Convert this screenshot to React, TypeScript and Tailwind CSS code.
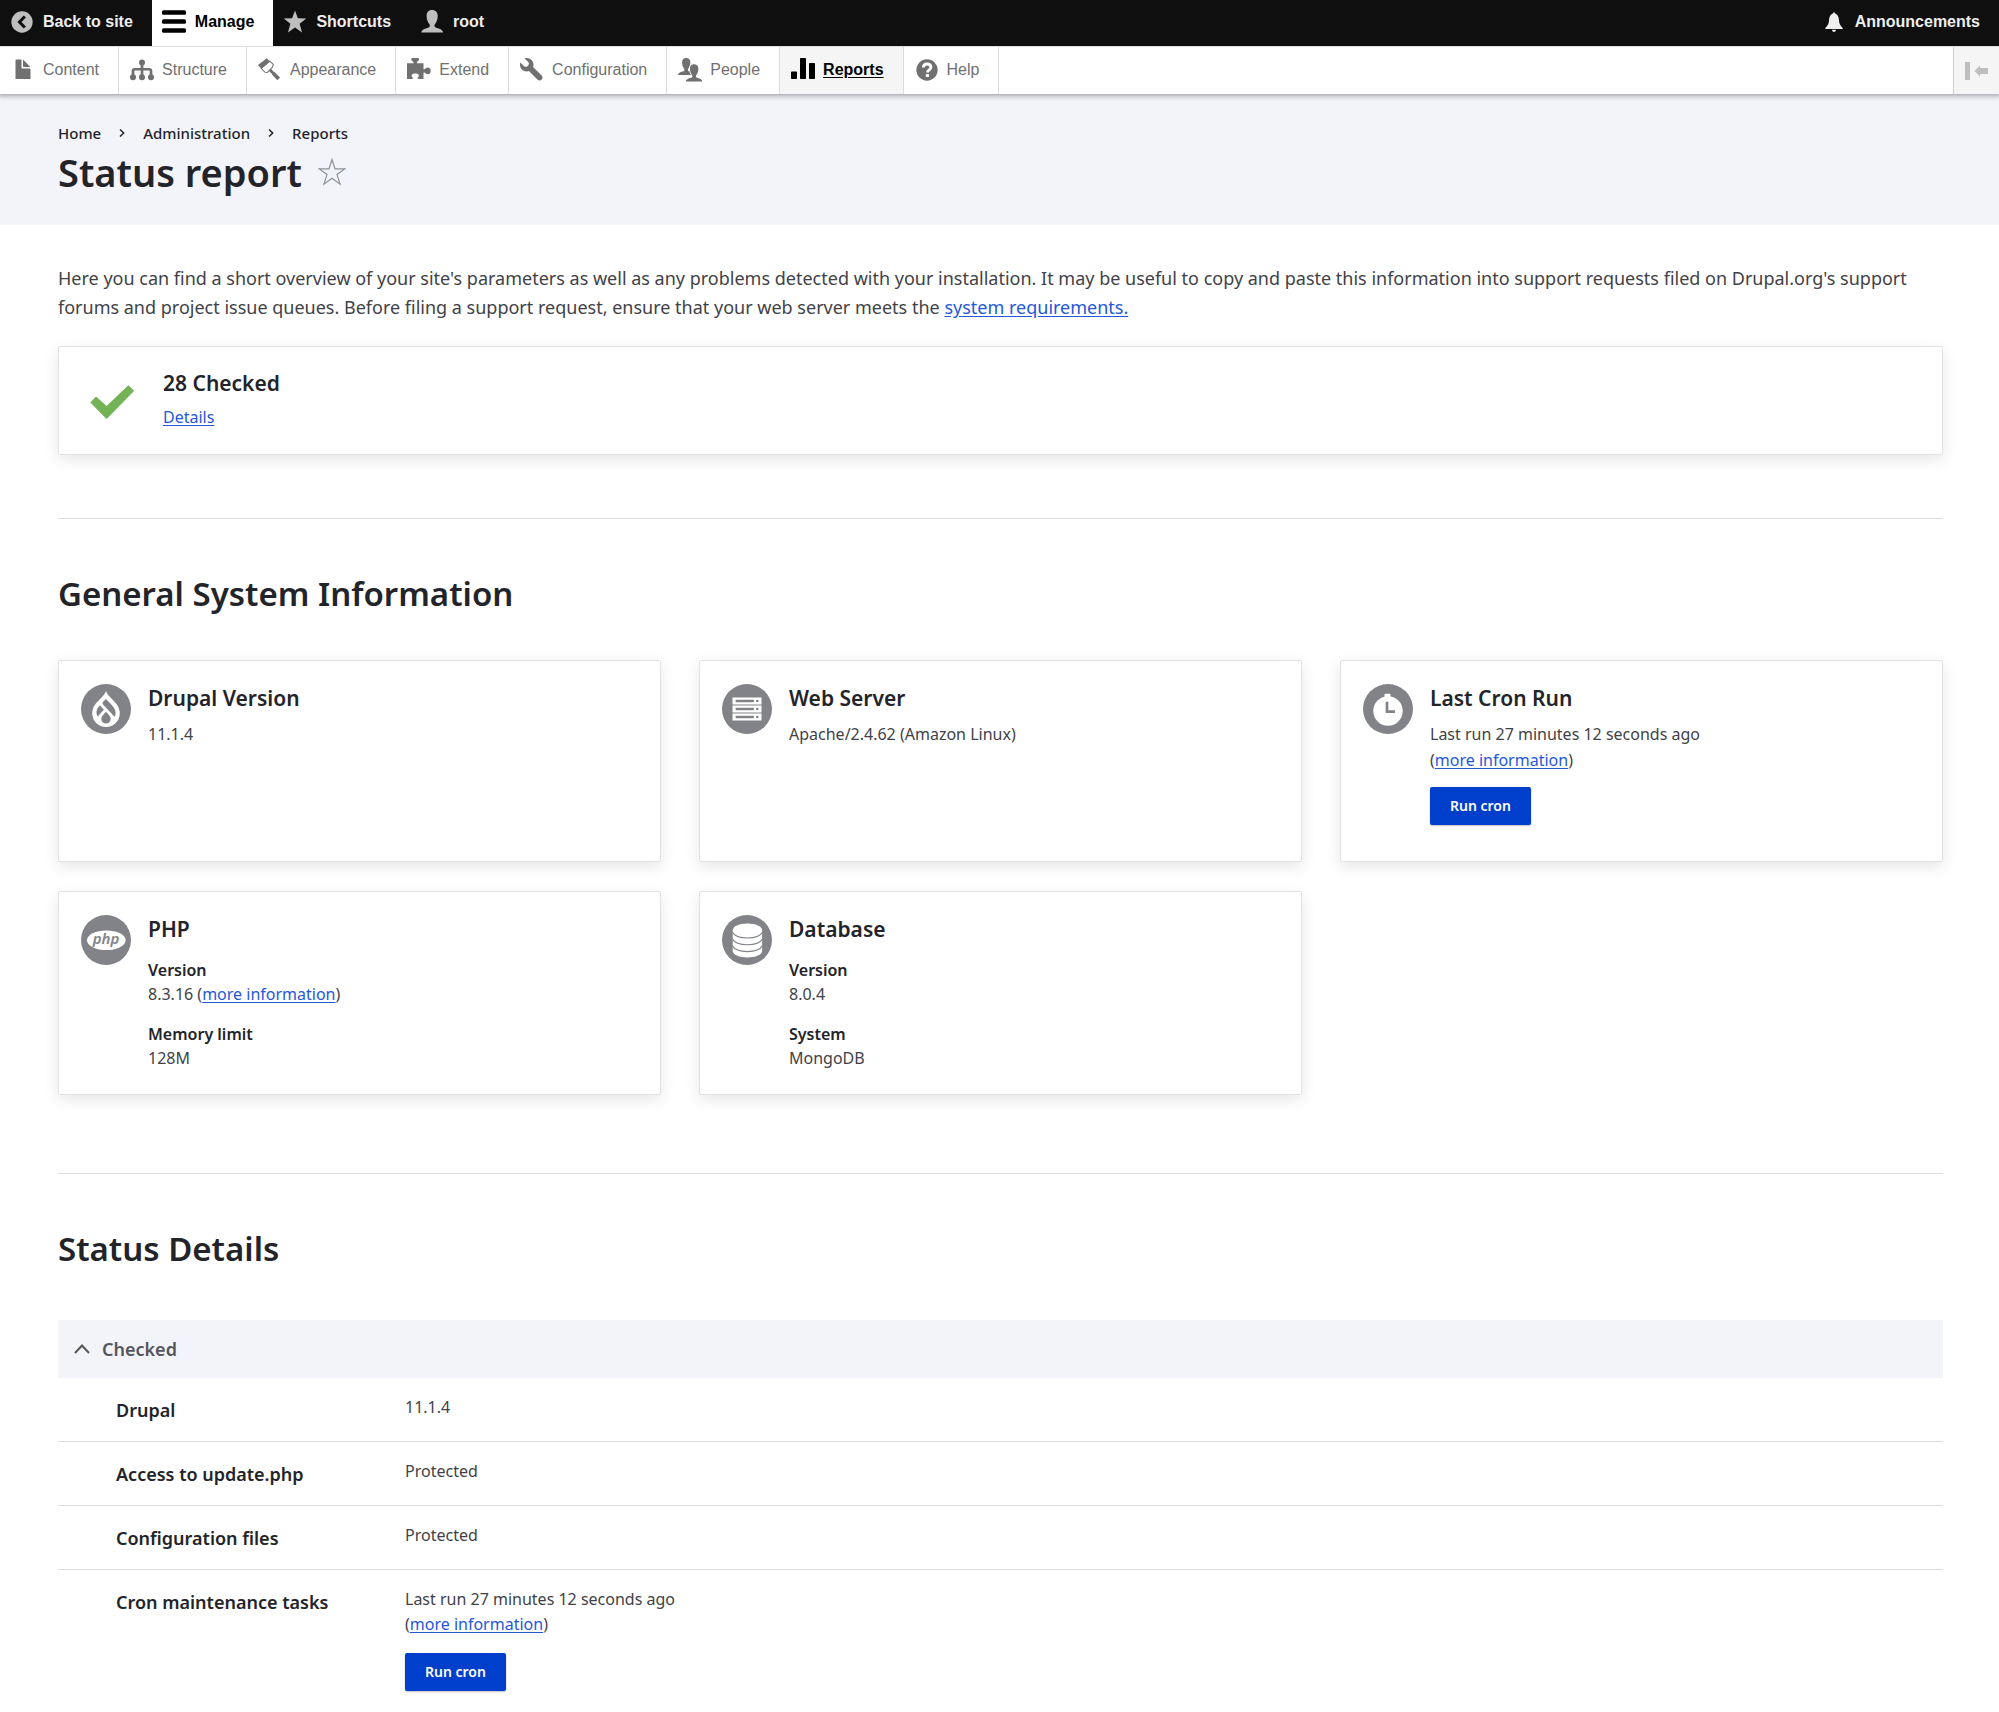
import React from "react";
import type { ReactNode } from "react";
import { SiDrupal } from "react-icons/si";

/* ---------- toolbar icons, drawn on a 16-unit grid ---------- */

function Glyph({ className, children }: { className?: string; children: ReactNode }) {
  return (
    <svg viewBox="0 0 16 16" aria-hidden="true" fill="currentColor" className={`h-6 w-6 shrink-0 ${className ?? ""}`}>
      {children}
    </svg>
  );
}

const BUST =
  "M8 0C5.5 0 4.3 1.6 4.4 4.2c.1 2.2.8 4.200 1.900 5.300.5 1 .3 1.900-.8 2.300C3.600 12.400 1 13 .8 15h14.600c-.2-2-2.700-2.600-4.700-3.200-1.100-.4-1.300-1.300-.8-2.300 1.100-1.100 1.800-3.100 1.900-5.300C11.900 1.600 10.500 0 8 0z";

const BackIcon = () => (
  <Glyph>
    <circle cx="8" cy="8" r="7.1" />
    <path d="M9.900 4.300 6.300 8l3.600 3.700" fill="none" stroke="#0f0f0f" strokeWidth="2" />
  </Glyph>
);
const MenuIcon = () => (
  <Glyph>
    <rect x="0" y=".2" width="16" height="2.900" rx="1" />
    <rect x="0" y="6.200" width="16" height="2.900" rx="1" />
    <rect x="0" y="12.200" width="16" height="2.900" rx="1" />
  </Glyph>
);
const StarIcon = () => (
  <Glyph>
    <path d="m8 .3 1.900 5.200 5.600.2-4.400 3.400 1.600 5.900L8 11.700 3.300 15l1.600-5.900L.5 5.700l5.600-.2z" />
  </Glyph>
);
const PersonIcon = () => (
  <Glyph>
    <path d={BUST} />
  </Glyph>
);
const BellIcon = () => (
  <Glyph>
    <path d="M8 1.700c.5 0 .8.3.9.8 1.500.5 2.300 2 2.400 4.200.1 2.300.9 3.900 2.500 5.300v.7H2.200V12c1.600-1.400 2.400-3 2.500-5.300.1-2.200.9-3.700 2.400-4.200.1-.5.4-.8.9-.8zM6.700 13.200h2.600c-.1.900-.6 1.500-1.300 1.500s-1.200-.6-1.300-1.500z" />
  </Glyph>
);
const FileIcon = () => (
  <Glyph>
    <path d="M12.500 7h-5A.5.5 0 0 1 7 6.500v-5A.5.5 0 0 0 6.500 1h-3a.5.5 0 0 0-.5.5V14h10V7.500a.5.5 0 0 0-.5-.5zM8.500 6h4c.3 0 .3-.2.1-.4L8.400 1.400c-.2-.2-.4-.1-.4.1v4c0 .3.2.5.5.5z" />
  </Glyph>
);
const TreeIcon = () => (
  <Glyph>
    <circle cx="8" cy="3" r="2" />
    <circle cx="2" cy="12.900" r="2" />
    <circle cx="8" cy="12.900" r="2" />
    <circle cx="14" cy="12.900" r="2" />
    <path d="M8 3v10M2 12.500V8.700q0-1.200 1.200-1.200h9.600q1.200 0 1.200 1.200v3.800" fill="none" stroke="currentColor" strokeWidth="1.800" />
  </Glyph>
);
const BrushIcon = () => (
  <Glyph>
    <path d="M5.800.2 0 4.700l2.300 2.500L8 2.400z" />
    <path d="M2.100 6.900 7.800 2.100l2.400 2.100-.5 1.900-3.400 3.500-1.600-.1z" fill="none" stroke="currentColor" strokeWidth=".7" strokeLinejoin="round" />
    <path d="m7.800 7.800 2.900 2.900" fill="none" stroke="currentColor" strokeWidth="1.900" />
    <path d="m10.200 10.200 3.600 3.700" fill="none" stroke="currentColor" strokeWidth="2.500" />
  </Glyph>
);
const PuzzleIcon = () => (
  <Glyph>
    <path d="M0 3.500h4.200c.3-.5.2-.9-.5-1.300-.6-.4-.9-.9-.9-1.300 0-.6.4-.9.900-.9h3.500c.5 0 .9.3.9.9 0 .5-.3.900-.9 1.300-.6.4-.8.8-.5 1.300H11v3.800c.4.400.900.3 1.400-.3.400-.4.9-.6 1.500-.6 1.100 0 1.900.9 1.900 2.200s-.8 2.200-1.900 2.200c-.6 0-1.100-.2-1.500-.6-.5-.6-1-.7-1.400-.3V14H7.300c-.3-.5-.2-.9.200-1.300.5-.5.6-1 .2-1.500-.5-.6-1.200-.9-2.200-.9s-1.700.3-2.200.9c-.4.5-.3 1 .2 1.500.4.4.5.8.2 1.300H0z" />
  </Glyph>
);
const WrenchIcon = () => (
  <Glyph>
    <path d="M14.416 11.586 8.750 5.920c.15-.449.252-.921.252-1.419C9.002 2.015 6.986 0 4.500 0c-.505 0-.981.102-1.434.255l2.431 2.431c.588.588.588 1.547 0 2.135l-.611.610c-.294.295-.68.441-1.066.441-.387 0-.773-.146-1.066-.441L.255 3.066C.102 3.519 0 3.996 0 4.500 0 6.986 2.014 9 4.500 9c.5 0 .972-.102 1.421-.251l5.667 5.665c.781.781 2.047.781 2.828 0s.781-2.047 0-2.828z" />
  </Glyph>
);
const PeopleIcon = () => (
  <Glyph>
    <path d={BUST} transform="translate(-.6 0) scale(.75)" />
    <path d={BUST} transform="translate(4.600 4.200) scale(.76)" stroke="#fff" strokeWidth="1.600" paintOrder="stroke" />
  </Glyph>
);
const ChartIcon = () => (
  <Glyph>
    <rect x="0" y="9" width="4" height="5" rx=".5" />
    <rect x="6" y="0" width="4" height="14" rx=".5" />
    <rect x="12" y="3.300" width="4" height="10.700" rx=".5" />
  </Glyph>
);
const HelpIcon = () => (
  <Glyph>
    <circle cx="8" cy="8" r="7.100" />
    <path d="M5.600 6.300C5.600 4.800 6.600 4 8.100 4s2.500.8 2.500 2.100c0 1.800-2.300 1.700-2.300 3.500" fill="none" stroke="#fff" strokeWidth="1.900" />
    <rect x="7.200" y="10.700" width="2.100" height="2" rx=".4" fill="#fff" />
  </Glyph>
);

/* ---------- round card icons, drawn on a 50-unit grid ---------- */

function Disc({ children }: { children?: ReactNode }) {
  return (
    <svg viewBox="0 0 50 50" aria-hidden="true" className="h-[50px] w-[50px]">
      <circle cx="25" cy="25" r="25" fill="#828388" />
      {children}
    </svg>
  );
}
const DrupalDisc = () => (
  <span className="flex h-[50px] w-[50px] items-center justify-center rounded-full bg-[#828388]">
    <SiDrupal aria-hidden="true" className="h-9 w-9 text-white" />
  </span>
);
const ServerDisc = () => (
  <Disc>
    {[13.5, 21.5, 29.5].map((y) => (
      <g key={y}>
        <rect x="10.500" y={y} width="29" height="7" fill="#fff" />
        <rect x="13.500" y={y + 2.2} width="18.500" height="2.600" rx="1" fill="#828388" />
        <circle cx="35.300" cy={y + 3.5} r="1.300" fill="#828388" />
      </g>
    ))}
  </Disc>
);
const ClockDisc = () => (
  <Disc>
    <circle cx="25" cy="27" r="14.700" fill="#fff" />
    <rect x="21.500" y="9.800" width="6" height="4" rx="1" fill="#fff" />
    <path d="M24 17.700v10H32" fill="none" stroke="#828388" strokeWidth="2.700" />
  </Disc>
);
const PhpDisc = () => (
  <Disc>
    <ellipse cx="25.300" cy="25.300" rx="19.300" ry="9.800" fill="#fff" />
    <text x="25" y="29" textAnchor="middle" fill="#828388" fontFamily="Noto Sans, sans-serif" fontStyle="italic" fontWeight="600" fontSize="15">
      php
    </text>
  </Disc>
);
const DatabaseDisc = () => (
  <Disc>
    <path d="M10.700 15c0-3.600 6.600-6.500 14.700-6.500s14.700 2.900 14.700 6.500v21c0 3.600-6.600 6.500-14.700 6.500S10.700 39.600 10.700 36z" fill="#fff" />
    <path
      d="M10.200 17c2 3.700 7.600 6 15.200 6s13.200-2.300 15.200-6M10.200 23.800c2 3.700 7.600 6 15.200 6s13.200-2.300 15.200-6M10.200 30.600c2 3.700 7.600 6 15.200 6s13.200-2.300 15.200-6"
      fill="none"
      stroke="#828388"
      strokeWidth="1.100"
    />
  </Disc>
);

/* ---------- shared pieces ---------- */

function Link({ children }: { children: ReactNode }) {
  return (
    <a href="#" className="text-[#2458d8] underline underline-offset-2">
      {children}
    </a>
  );
}

function CronStatus({ lineClass }: { lineClass: string }) {
  return (
    <p className={lineClass}>
      Last run 27 minutes 12 seconds ago
      <br />(<Link>more information</Link>)
    </p>
  );
}

function RunCronButton() {
  return (
    <button
      type="button"
      className="h-[38px] rounded-xs bg-[#003ecc] px-5 text-sm font-semibold text-white shadow-[0_1px_2px_rgba(0,0,0,0.25)]"
    >
      Run cron
    </button>
  );
}

const CARD = "rounded-xs border border-[#e2e2e5] bg-white shadow-[0_5px_15px_rgba(0,0,0,0.1)]";

function InfoCard({ icon, title, children }: { icon: ReactNode; title: string; children: ReactNode }) {
  return (
    <section className={`flex gap-[17px] px-[22px] pt-[23px] pb-6 ${CARD}`}>
      <div className="shrink-0">{icon}</div>
      <div>
        <h3 className="text-[21px] leading-7 font-semibold text-[#232429]">{title}</h3>
        {children}
      </div>
    </section>
  );
}

function Facts({ items }: { items: { term: string; value: ReactNode }[] }) {
  return (
    <dl className="mt-[15px] flex flex-col gap-4 text-base leading-6">
      {items.map((i) => (
        <div key={i.term}>
          <dt className="font-semibold text-[#232429]">{i.term}</dt>
          <dd>{i.value}</dd>
        </div>
      ))}
    </dl>
  );
}

function SectionTitle({ children }: { children: ReactNode }) {
  return <h2 className="mt-[53px] text-[33px] leading-[44px] font-semibold text-[#232429]">{children}</h2>;
}

/* ---------- page ---------- */

const tray = [
  { label: "Content", icon: <FileIcon /> },
  { label: "Structure", icon: <TreeIcon /> },
  { label: "Appearance", icon: <BrushIcon /> },
  { label: "Extend", icon: <PuzzleIcon /> },
  { label: "Configuration", icon: <WrenchIcon /> },
  { label: "People", icon: <PeopleIcon /> },
  { label: "Reports", icon: <ChartIcon />, active: true },
  { label: "Help", icon: <HelpIcon /> },
];

function Toolbar() {
  const item = "flex items-center gap-[9px] pl-[10px] pr-[19px]";
  return (
    <div className="relative font-['Liberation_Sans',Arial,sans-serif] text-base leading-5 shadow-[0_0_5px_2px_rgba(0,0,0,0.33)]">
      <nav aria-label="Toolbar" className="flex h-[46px] bg-[#0f0f0f] pb-0.5 font-bold text-[#eee]">
        <a href="#" className={item}>
          <span className="text-[#bebebe]"><BackIcon /></span>Back to site
        </a>
        <a href="#" className={`-mb-0.5 bg-white pb-0.5 text-black ${item}`}>
          <MenuIcon />Manage
        </a>
        <a href="#" className={item}>
          <span className="text-[#bebebe]"><StarIcon /></span>Shortcuts
        </a>
        <a href="#" className={item}>
          <span className="text-[#bebebe]"><PersonIcon /></span>root
        </a>
        <a href="#" className={`ml-auto ${item}`}>
          <BellIcon />Announcements
        </a>
      </nav>
      <nav aria-label="Administration menu" className="flex h-12 border-t border-[#ddd] bg-white text-[#707070]">
        {tray.map((t) => (
          <a
            key={t.label}
            href="#"
            className={
              t.active
                ? "flex items-center gap-2 border-r border-[#ddd] bg-[#f5f5f5] pr-[19px] pb-0.5 pl-[11px] font-bold text-black"
                : "flex items-center gap-2 border-r border-[#ddd] pr-[19px] pb-0.5 pl-[11px]"
            }
          >
            {t.icon}
            <span className={t.active ? "underline underline-offset-2" : ""}>{t.label}</span>
          </a>
        ))}
        <button
          type="button"
          aria-label="Vertical orientation"
          className="ml-auto flex w-[46px] items-center justify-center border-l border-[#ccc] bg-[#f5f5f5] text-[#bebebe]"
        >
          <svg viewBox="0 0 24 24" aria-hidden="true" fill="currentColor" className="h-6 w-6">
            <path d="M0 3h5v18H0zM9.500 12l5.500-5.500V9h8v6h-8v2.500z" />
          </svg>
        </button>
      </nav>
    </div>
  );
}

const Chevron = () => (
  <svg viewBox="0 0 6 8" aria-hidden="true" className="h-2 w-1.5" fill="none" stroke="#232429" strokeWidth="1.500">
    <path d="m1 .5 3.700 3.500L1 7.500" />
  </svg>
);

const rows: { label: string; value: ReactNode }[] = [
  { label: "Drupal", value: "11.1.4" },
  { label: "Access to update.php", value: "Protected" },
  { label: "Configuration files", value: "Protected" },
  {
    label: "Cron maintenance tasks",
    value: (
      <>
        <CronStatus lineClass="mb-4" />
        <RunCronButton />
      </>
    ),
  },
];

export default function App() {
  return (
    <div className="bg-white font-['Noto_Sans',sans-serif] text-[#414247]">
      <Toolbar />

      <header className="bg-[#f3f4f9] pt-[29px] pr-14 pb-[29px] pl-[58px] text-[#232429]">
        <nav aria-label="Breadcrumb">
          <ol className="flex items-center gap-[18px] text-[15px] leading-5 font-medium">
            <li><a href="#">Home</a></li>
            <li aria-hidden="true"><Chevron /></li>
            <li><a href="#">Administration</a></li>
            <li aria-hidden="true"><Chevron /></li>
            <li><a href="#">Reports</a></li>
          </ol>
        </nav>
        <div className="mt-[5px] flex items-center gap-4">
          <h1 className="text-[38px] leading-[48px] font-semibold">Status report</h1>
          <button type="button" aria-label="Add to Default shortcuts">
            <svg viewBox="0 0 28 28" aria-hidden="true" className="block h-7 w-7" fill="none" stroke="#8e929c" strokeWidth="1.200">
              <path d="m14 1.500 3 9.300h10l-8 5.800 3.100 9.600-8.100-6-8.100 6L9 16.600l-8-5.800h10z" />
            </svg>
          </button>
        </div>
      </header>

      <main className="pt-[39px] pr-14 pl-[58px]">
        <p className="text-lg leading-[29px]">
          Here you can find a short overview of your site's parameters as well as any problems detected with your
          installation. It may be useful to copy and paste this information into support requests filed on Drupal.org's
          support forums and project issue queues. Before filing a support request, ensure that your web server meets
          the <Link>system requirements.</Link>
        </p>

        <section className={`mt-6 mb-[63px] flex gap-[29px] pt-[21px] pb-[25px] pl-[31px] ${CARD}`}>
          <svg viewBox="0 0 44 34" aria-hidden="true" className="mt-[17px] h-[34px] w-11">
            <path
              d="M.8 17 5.500 12q.5-.6 1.100 0l10 9L37.800.8q.6-.6 1.200 0l4.500 4.500q.6.6 0 1.200L17.200 33.400q-.6.600-1.200 0L.8 18q-.5-.5 0-1z"
              fill="#73b355"
            />
          </svg>
          <div>
            <h3 className="text-[21px] leading-[30px] font-semibold text-[#232429]">28 Checked</h3>
            <p className="mt-[7px] text-base leading-6"><Link>Details</Link></p>
          </div>
        </section>

        <hr className="border-[#dcdde1]" />
        <SectionTitle>General System Information</SectionTitle>

        <div className="mt-11 mb-[78px] grid grid-cols-3 gap-x-[38px] gap-y-[29px]">
          <InfoCard icon={<DrupalDisc />} title="Drupal Version">
            <p className="mt-[9px] text-base leading-[26px]">11.1.4</p>
          </InfoCard>
          <InfoCard icon={<ServerDisc />} title="Web Server">
            <p className="mt-[9px] text-base leading-[26px]">Apache/2.4.62 (Amazon Linux)</p>
          </InfoCard>
          <InfoCard icon={<ClockDisc />} title="Last Cron Run">
            <CronStatus lineClass="mt-[9px] mb-[14px] text-base leading-[26px]" />
            <div className="pb-3"><RunCronButton /></div>
          </InfoCard>
          <InfoCard icon={<PhpDisc />} title="PHP">
            <Facts
              items={[
                { term: "Version", value: <>8.3.16 (<Link>more information</Link>)</> },
                { term: "Memory limit", value: "128M" },
              ]}
            />
          </InfoCard>
          <InfoCard icon={<DatabaseDisc />} title="Database">
            <Facts
              items={[
                { term: "Version", value: "8.0.4" },
                { term: "System", value: "MongoDB" },
              ]}
            />
          </InfoCard>
        </div>

        <hr className="border-[#dcdde1]" />
        <SectionTitle>Status Details</SectionTitle>

        <details open className="mt-[49px]">
          <summary className="flex cursor-pointer list-none items-center gap-3 bg-[#f3f4f9] pl-4 text-lg leading-[58px] font-semibold text-[#55565b]">
            <svg viewBox="0 0 16 10" aria-hidden="true" className="h-[10px] w-4" fill="none" stroke="#55565b" strokeWidth="2">
              <path d="m1 9 7-7.500L15 9" />
            </svg>
            Checked
          </summary>
          <table className="w-full text-left">
            <tbody>
              {rows.map((r) => (
                <tr key={r.label} className="border-b border-[#dcdde1] align-top last:border-0">
                  <th scope="row" className="w-[347px] pt-[18px] pb-[17px] pl-[58px] text-lg leading-7 font-semibold text-[#232429]">
                    {r.label}
                  </th>
                  <td className="pt-[17px] pb-[18px] text-base leading-[25px]">{r.value}</td>
                </tr>
              ))}
            </tbody>
          </table>
        </details>
      </main>
    </div>
  );
}
